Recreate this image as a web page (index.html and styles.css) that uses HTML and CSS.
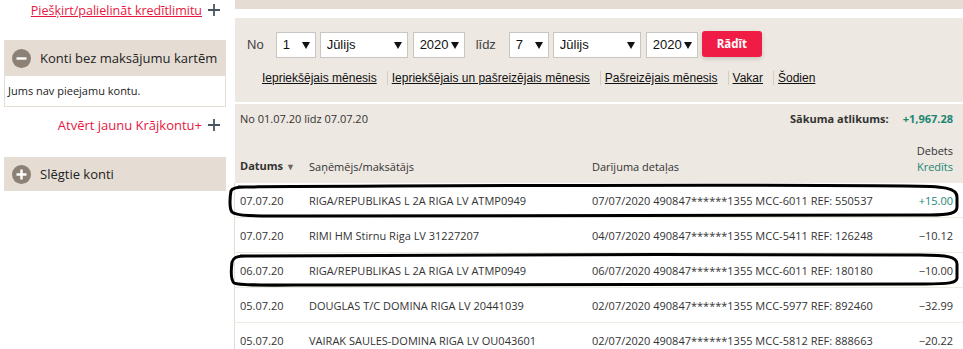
FILE: index.html
```html
<!DOCTYPE html>
<html lang="lv">
<head>
    <meta charset="UTF-8">
    <title>Konta izraksts</title>
    <link rel="stylesheet" href="styles.css">
</head>
<body>
    <div class="page">
        <div class="sidebar">
            <div class="side-link first">
                <a href="#">Piešķirt/palielināt kredītlimitu</a>
                <svg class="plus" width="12" height="12" viewBox="0 0 12 12"><path d="M6 0V12M0 6H12" stroke="#4b5562" stroke-width="1.8"/></svg>
            </div>

            <div class="panel">
                <div class="panel-head">
                    <svg class="round" width="19" height="19" viewBox="0 0 19 19"><circle cx="9.5" cy="9.5" r="9.5" fill="#8c8174"/><path d="M4.5 9.5H14.5" stroke="#fff" stroke-width="2.4"/></svg>
                    <span>Konti bez maksājumu kartēm</span>
                </div>
                <div class="panel-body">Jums nav pieejamu kontu.</div>
            </div>

            <div class="side-link second">
                <a href="#" class="plain">Atvērt jaunu Krājkontu+</a>
                <svg class="plus" width="12" height="12" viewBox="0 0 12 12"><path d="M6 0V12M0 6H12" stroke="#4b5562" stroke-width="1.8"/></svg>
            </div>

            <div class="panel closed">
                <div class="panel-head">
                    <svg class="round" width="19" height="19" viewBox="0 0 19 19"><circle cx="9.5" cy="9.5" r="9.5" fill="#8c8174"/><path d="M4.5 9.5H14.5M9.5 4.5V14.5" stroke="#fff" stroke-width="2.4"/></svg>
                    <span>Slēgtie konti</span>
                </div>
            </div>
        </div>

        <div class="main">
            <div class="top-band"></div>

            <div class="filter">
                <div class="controls">
                    <span class="lbl">No</span>
                    <select class="sel day"><option>1</option></select>
                    <select class="sel month"><option>Jūlijs</option></select>
                    <select class="sel year"><option>2020</option></select>
                    <span class="lbl until">līdz</span>
                    <select class="sel day"><option>7</option></select>
                    <select class="sel month"><option>Jūlijs</option></select>
                    <select class="sel year"><option>2020</option></select>
                    <button class="show">Rādīt</button>
                </div>
                <div class="periods">
                    <a href="#">Iepriekšējais mēnesis</a>
                    <a href="#">Iepriekšējais un pašreizējais mēnesis</a>
                    <a href="#">Pašreizējais mēnesis</a>
                    <a href="#">Vakar</a>
                    <a href="#">Šodien</a>
                </div>
            </div>

            <div class="summary">
                <div class="range">
                    <span>No 01.07.20 līdz 07.07.20</span>
                    <span class="balance"><b>Sākuma atlikums:</b><b class="green">+1,967.28</b></span>
                </div>
                <div class="row head">
                    <span class="sort"><b>Datums</b> <small>&#9660;</small></span>
                    <span>Saņēmējs/maksātājs</span>
                    <span>Darījuma detaļas</span>
                    <span class="amount">Debets<br><i class="green">Kredīts</i></span>
                </div>
            </div>

            <div class="rows">
                <div class="row">
                    <span>07.07.20</span>
                    <span>RIGA/REPUBLIKAS L 2A RIGA LV ATMP0949</span>
                    <span>07/07/2020 490847******1355 MCC-6011 REF: 550537</span>
                    <span class="amount green">+15.00</span>
                </div>
                <div class="row">
                    <span>07.07.20</span>
                    <span>RIMI HM Stirnu Riga LV 31227207</span>
                    <span>04/07/2020 490847******1355 MCC-5411 REF: 126248</span>
                    <span class="amount">&minus;10.12</span>
                </div>
                <div class="row">
                    <span>06.07.20</span>
                    <span>RIGA/REPUBLIKAS L 2A RIGA LV ATMP0949</span>
                    <span>06/07/2020 490847******1355 MCC-6011 REF: 180180</span>
                    <span class="amount">&minus;10.00</span>
                </div>
                <div class="row">
                    <span>05.07.20</span>
                    <span>DOUGLAS T/C DOMINA RIGA LV 20441039</span>
                    <span>02/07/2020 490847******1355 MCC-5977 REF: 892460</span>
                    <span class="amount">&minus;32.99</span>
                </div>
                <div class="row">
                    <span>05.07.20</span>
                    <span>VAIRAK SAULES-DOMINA RIGA LV OU043601</span>
                    <span>02/07/2020 490847******1355 MCC-5812 REF: 888663</span>
                    <span class="amount">&minus;20.22</span>
                </div>
            </div>
        </div>
    </div>

    <!-- hand drawn marks over two rows -->
    <svg class="marks" width="963" height="349" viewBox="0 0 963 349">
        <path d="M238 187 C400 186 700 184 905 186 C945 186 957 188 957 197 L957 207 C957 213 950 215 930 215 L300 216 C250 216 236 216 232 212 C229 208 230 196 231 191 C232 188 236 187 245 187" />
        <path d="M240 256 C400 255 700 254 920 255 C948 255 957 257 957 264 L957 278 C957 283 948 284 925 284 L330 285 C270 285 240 286 234 283 C231 280 231 270 232 262 C233 258 236 256 246 256" />
    </svg>
</body>
</html>
```

FILE: styles.css
```css
body {
    margin: 0;
    font-family: "Open Sans", Arial, sans-serif;
    font-size: 11px;
    color: #333;
    background-color: #fff;
    position: relative;
}
a {
    color: #111;
}
.page {
    display: flex;
    align-items: flex-start;
}

/* Sidebar */
.sidebar {
    width: 222px;
    margin-left: 4px;
    margin-right: 9px;
}
.side-link {
    display: flex;
    justify-content: flex-end;
    align-items: center;
    gap: 6px;
    padding-right: 6px;
    height: 20px;
}
.side-link a {
    color: #e8173f;
    font-size: 12.5px;
}
.side-link a.plain {
    text-decoration: none;
    font-size: 13px;
}
.side-link.first {
    margin-bottom: 20px;
}
.side-link.second {
    margin-top: 8px;
    margin-bottom: 22px;
}
.panel-head {
    display: flex;
    align-items: center;
    gap: 9px;
    height: 36px;
    padding-left: 8px;
    background-color: #e5ddd3;
    font-size: 13px;
    color: #222;
}
.panel.closed .panel-head {
    height: 34px;
}
.panel-body {
    height: 30px;
    line-height: 29px;
    padding-left: 3px;
    border: 1px solid #e5ddd3;
    border-top: none;
    font-size: 11px;
    color: #222;
}

/* Main */
.main {
    flex: 1;
}
.top-band {
    height: 9px;
    margin-bottom: 9px;
    background-color: #e5ddd3;
}
.filter {
    height: 84px;
    background-color: #ede8e1;
    font-family: "Liberation Sans", Arial, sans-serif;
}
.controls {
    display: flex;
    align-items: center;
    height: 27px;
    padding: 13px 0 0 12px;
}
.lbl {
    font-size: 13px;
    color: #444;
    margin-right: 12px;
}
.lbl.until {
    margin-left: 7px;
    margin-right: 13px;
}
.sel {
    appearance: none;
    box-sizing: border-box;
    height: 26px;
    margin-right: 4px;
    padding: 0 0 0 6px;
    font-family: "Liberation Sans", Arial, sans-serif;
    font-size: 13px;
    color: #111;
    background: #fff url("data:image/svg+xml,%3Csvg xmlns='http://www.w3.org/2000/svg' width='8' height='8'%3E%3Cpath d='M0 1H8L4 8Z' fill='%23111'/%3E%3C/svg%3E") no-repeat right 5px center;
    border: 1px solid #c9c6c2;
    border-radius: 0;
}
.sel.day {
    width: 40px;
}
.sel.month {
    width: 88px;
    margin-right: 5px;
}
.sel.year {
    width: 52px;
}
.show {
    width: 60px;
    height: 26px;
    border: none;
    border-radius: 3px;
    background-color: #ef1c46;
    color: #fff;
    font-family: "Open Sans", Arial, sans-serif;
    font-weight: bold;
    font-size: 11.5px;
    box-shadow: 0 2px 4px rgba(0, 0, 0, 0.15);
    position: relative;
    top: -1px;
}
.periods {
    display: flex;
    align-items: center;
    padding: 13px 0 0 27px;
    font-size: 12px;
}
.periods a {
    padding: 0 4px;
    border-left: 1px solid #d3cdc6;
    line-height: 14px;
}
.periods a:first-child {
    border-left: none;
    padding-left: 0;
    margin-right: 6px;
}
.periods a + a {
    margin-right: 6px;
}

.summary {
    margin-top: 2px;
    background-color: #ede8e1;
}
.range {
    display: flex;
    justify-content: space-between;
    padding: 6px 10px 0 5px;
    line-height: 18px;
}
.balance b {
    margin-left: 14px;
}
.green {
    color: #1c8672;
    font-style: normal;
}
.row {
    display: grid;
    grid-template-columns: 69px 283px 1fr auto;
    align-items: center;
    padding: 0 10px 0 5px;
    height: 34px;
    border-left: 1px solid #e5ddd3;
    border-bottom: 1px solid #efeae4;
    margin-left: -1px;
    white-space: nowrap;
}
.row.head {
    height: auto;
    padding-top: 15px;
    padding-bottom: 8px;
    line-height: 16px;
    align-items: end;
    border: none;
    margin-left: 0;
}
.sort small {
    font-size: 9px;
    color: #666;
}
.amount {
    text-align: right;
}
.rows .row {
    background-color: #fff;
}

.marks {
    position: absolute;
    top: 0;
    left: 0;
    pointer-events: none;
}
.marks path {
    fill: none;
    stroke: #000;
    stroke-width: 3;
    stroke-linejoin: round;
}
```
